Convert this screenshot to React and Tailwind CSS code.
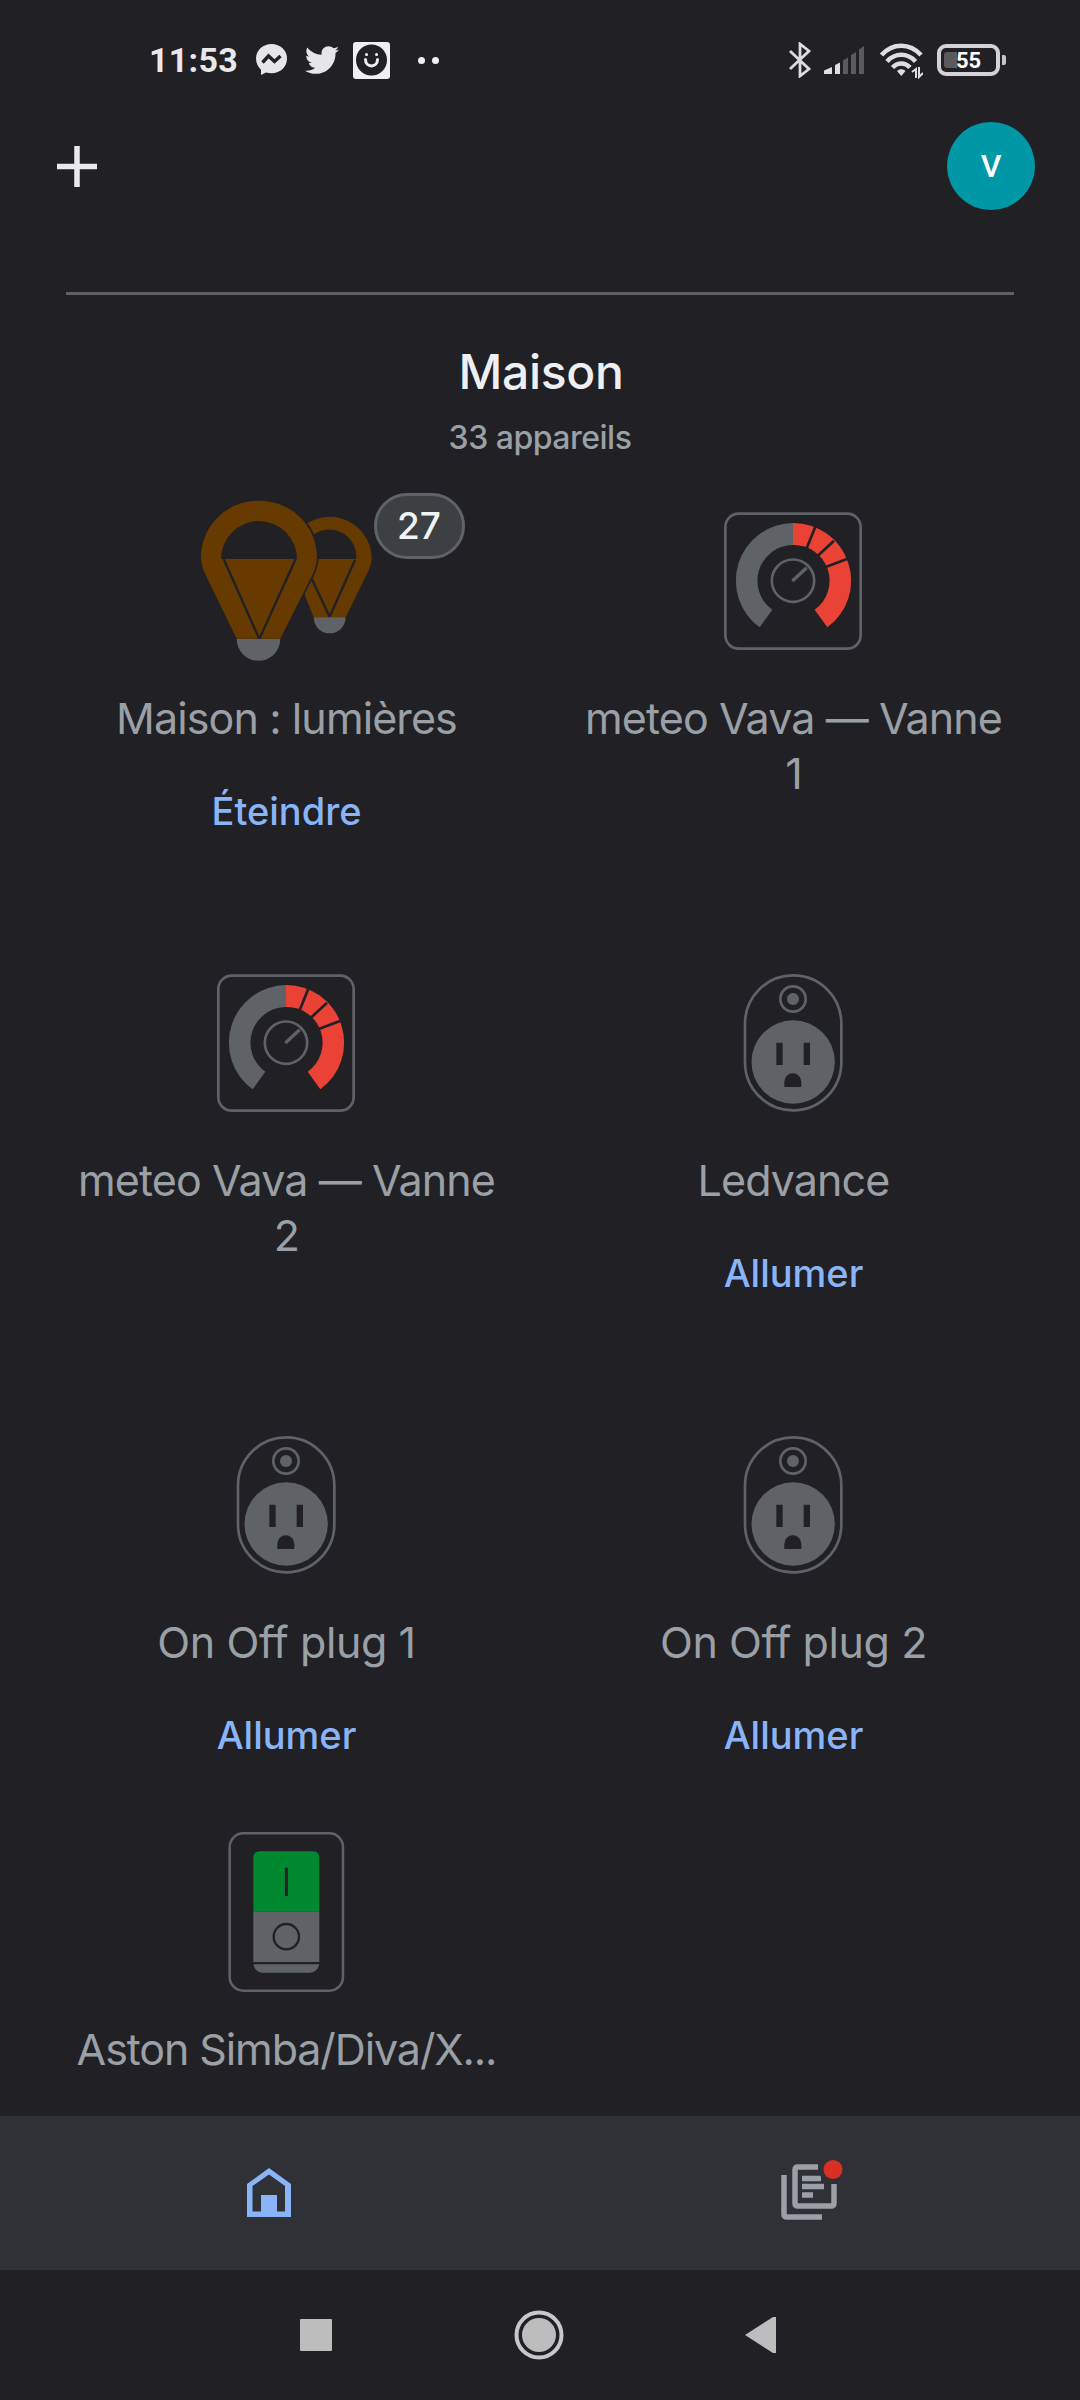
import React from "react";

function StatusBar() {
  return (
    <header className="flex h-[120px] items-center justify-between pl-[149px] pr-[74px] font-['Roboto',sans-serif] text-[#e8e8ea]">
      <div className="flex h-[40px] items-center">
        <span className="w-[88px] whitespace-nowrap text-[34px] font-bold leading-[40px] tracking-[0.3px]">11:53</span>
        <svg className="ml-[18px]" width="33" height="34" viewBox="0 0 33 34">
          <path fill="#e6e6e8" d="M16.5 1C7.5 1 1 7.4 1 15.6c0 4.6 2 8.500 5 11.100v5.300l5-2.500c1.700.5 3.500.8 5.500.8 9 0 15.500-6.500 15.500-14.700S25.500 1 16.500 1z" />
          <path fill="none" stroke="#202025" strokeWidth="3.400" d="M7.500 19.500l6-6.500 6 5.500 6-5.500" />
        </svg>
        <svg className="ml-[15px]" width="37" height="36" viewBox="0 0 24 24">
          <path fill="#e6e6e8" d="M23.643 4.937c-.835.37-1.732.62-2.675.733.962-.576 1.700-1.490 2.048-2.578-.9.534-1.897.922-2.958 1.130-.850-.904-2.060-1.470-3.400-1.470-2.572 0-4.658 2.086-4.658 4.660 0 .364.042.718.120 1.060-3.873-.195-7.304-2.050-9.602-4.868-.4.690-.63 1.490-.63 2.342 0 1.616.823 3.043 2.072 3.878-.764-.025-1.482-.234-2.110-.583v.06c0 2.257 1.605 4.140 3.737 4.568-.392.106-.803.162-1.227.162-.3 0-.593-.028-.877-.082.593 1.850 2.313 3.198 4.352 3.234-1.595 1.250-3.604 1.995-5.786 1.995-.376 0-.747-.022-1.112-.065 2.062 1.323 4.510 2.093 7.140 2.093 8.570 0 13.255-7.098 13.255-13.254 0-.2-.005-.402-.014-.602.910-.658 1.700-1.477 2.323-2.410z" />
        </svg>
        <svg className="ml-[13px]" width="37" height="37" viewBox="0 0 37 37">
          <rect width="37" height="37" rx="3" fill="#f0f0f1" />
          <circle cx="18.500" cy="18" r="15.500" fill="#202025" />
          <g fill="none" stroke="#f0f0f1" strokeLinecap="round">
            <path strokeWidth="3" d="M12.500 17.500c0 8.500 12 8.500 12 0" />
            <path strokeWidth="3" d="M13.500 12.500h.1M23.500 12.500h.1" />
          </g>
        </svg>
        <span className="ml-[28px] size-[7px] rounded-full bg-[#f0f0f1]" />
        <span className="ml-[7px] size-[7px] rounded-full bg-[#f0f0f1]" />
      </div>
      <div className="flex h-[40px] items-center">
        <svg width="24" height="36" viewBox="0 0 24 36">
          <path fill="none" stroke="#dcdcde" strokeWidth="2.800" d="M2 9l19 18-9 7V2l9 7L2 27" />
        </svg>
        <svg className="ml-[12px]" width="40" height="30" viewBox="0 0 40 30">
          <path fill="#dededf" d="M0 29v-3.500L8 22v7zM11 29v-9l5-2.500V29z" />
          <path fill="#5b5b5f" d="M19 29V15.500l5-3V29zM27 29V10l5-3v22zM35 29V4.500L40 1v28z" />
        </svg>
        <svg className="ml-[16px]" width="43" height="38" viewBox="0 0 43 38">
          <g fill="none" stroke="#dededf" strokeWidth="4.500">
            <path d="M1.500 14c11-12.500 28.500-12.500 39.500 0" />
            <path d="M7 20.500c8-9 20.500-9 28.500 0" />
            <path d="M12.500 26.500c5-5.500 12.500-5.500 17.500 0" />
          </g>
          <path fill="#dededf" d="M17 30c2.500-2.500 6-2.500 8.500 0l-4.200 5z" />
          <path fill="none" stroke="#dededf" strokeWidth="2" d="M32 31l4-3v9M43 32l-4 4v-10" />
        </svg>
        <div className="ml-[14px] flex h-[32px] w-[63px] items-center rounded-[9px] border-[4px] border-[#d4d2d7] pl-[3px]">
          <span className="h-[16px] w-[13px] rounded-l-[3px] bg-[#5a5a5d]" />
          <span className="-ml-[1px] pt-[2px] text-[22px] font-bold leading-none text-white">55</span>
        </div>
        <span className="ml-[2px] h-[10px] w-[4px] rounded-r-[2px] bg-[#c4c4c8]" />
      </div>
    </header>
  );
}

function BulbsIcon() {
  return (
    <svg width="300" height="200" viewBox="-133 3 900 600">
      <path fill="#673b00" d="M376 133A126 126 0 0 1 574 235Q574 255 561 279L496 412H400L370 337z" />
      <path fill="#202025" d="M396 166A82 82 0 0 1 528 237H402z" />
      <path fill="none" stroke="#202025" strokeWidth="7" d="M524 240l-76 170-56-118" />
      <path fill="#5f6368" d="M400 412h96a48 48 0 0 1-96 0z" />
      <path fill="#673b00" stroke="#202025" strokeWidth="10" paintOrder="stroke" d="M169 476L76 285Q62 257 62 232C62 140 137 62 236 62s174 78 174 170q0 25-14 53l-96 191z" />
      <path fill="#202025" d="M122 237a114 114 0 0 1 228 0z" />
      <path fill="none" stroke="#202025" strokeWidth="7" d="M130 237l107 240 109-240" />
      <path fill="#5f6368" d="M169 477h131a65.500 65.500 0 0 1-131 0z" />
    </svg>
  );
}

function GaugeIcon() {
  return (
    <svg width="200" height="200" viewBox="-21 -27 600 600">
      <rect x="76" y="71" width="406" height="405" rx="40" fill="none" stroke="#5f6368" strokeWidth="8" />
      <path fill="#5f6368" d="M279 99A173 173 0 0 0 179 412L217 359A107 107 0 0 1 279 165z" />
      <path fill="#ea4335" d="M279 99A173 173 0 0 1 382 412L344 359A107 107 0 0 0 279 165z" />
      <path fill="none" stroke="#202025" strokeWidth="8" d="M346 110l-28 70M402 152l-50 47M443 206l-66 25" />
      <circle cx="279" cy="272" r="63.500" fill="none" stroke="#5f6368" strokeWidth="8" />
      <path stroke="#5f6368" strokeWidth="10" d="M277 273l43-40" />
    </svg>
  );
}

function PlugIcon() {
  return (
    <svg width="200" height="200" viewBox="-81 -51 600 600">
      <rect x="75" y="46" width="289" height="405" rx="144.500" fill="none" stroke="#5f6368" strokeWidth="8" />
      <circle cx="219" cy="117" r="38" fill="none" stroke="#5f6368" strokeWidth="8" />
      <circle cx="219" cy="117" r="18" fill="#5f6368" />
      <circle cx="219.500" cy="306" r="125" fill="#5f6368" />
      <path fill="#202025" d="M169 248h19v67h-19zM251 248h19v67h-19zM193 381v-16a25.500 25.500 0 0 1 51 0v16z" />
    </svg>
  );
}

function SwitchIcon() {
  return (
    <svg width="200" height="200" viewBox="-43 6 600 600">
      <rect x="88" y="70" width="340" height="472" rx="41" fill="none" stroke="#5f6368" strokeWidth="7.500" />
      <path fill="#008930" d="M159 305V144q0-20 20-20h158q20 0 20 20v161z" />
      <path fill="#5f6368" d="M159 305h198v151H159zM159 463h198q-6 25-28 25H187q-22 0-28-25z" />
      <path stroke="#202025" strokeWidth="9" d="M258 173v85" />
      <circle cx="258" cy="380" r="38" fill="none" stroke="#202025" strokeWidth="7" />
    </svg>
  );
}

function Tile({ icon, label, action, badge, labelClass = "" }) {
  return (
    <article className="flex w-[507px] flex-col items-center">
      <div className="relative flex h-[200px] w-[300px] justify-center">
        {icon}
        {badge && (
          <span className="absolute left-[238px] top-[12px] flex h-[66px] w-[91px] items-center justify-center rounded-full border-[3px] border-[#5f6368] bg-[#3c4043] text-[37px] font-medium text-[#f1f3f4]">
            {badge}
          </span>
        )}
      </div>
      <h2 className={`ml-[2px] mt-[10px] w-[427px] text-center text-[43px] leading-[55px] text-[#9aa0a6] ${labelClass}`}>{label}</h2>
      {action && (
        <button className="ml-[2px] mt-[41px] whitespace-nowrap text-[38px] font-medium leading-[48px] text-[#8ab4f8]">{action}</button>
      )}
    </article>
  );
}

function BottomNav() {
  return (
    <nav className="grid h-[154px] shrink-0 grid-cols-2 bg-[#303136]">
      <button className="flex items-start justify-center pr-[2px] pt-[51px]">
        <svg width="46" height="51" viewBox="0 0 46 51">
          <path fill="#8ab4f8" fillRule="evenodd" d="M1 50V17L23 1l22 16v33zM6.500 44.500h8.500V28h16v16.500h8V19L23 7.500 6.500 19z" />
        </svg>
      </button>
      <button className="flex items-start justify-center pt-[43px]">
        <svg className="overflow-visible" width="64" height="64" viewBox="0 0 64 64">
          <g fill="none" stroke="#9aa0a6" strokeWidth="5.500">
            <path d="M6 16v39q0 3 3 3h35" />
            <path d="M40 8H20q-3 0-3 3v33q0 3 3 3h33q3 0 3-3V25" />
            <path d="M24 19.500h19M24 27.500h22M24 36h11" />
          </g>
          <circle cx="55" cy="11" r="14" fill="#303136" />
          <circle cx="55" cy="10.500" r="9.500" fill="#d93025" />
        </svg>
      </button>
    </nav>
  );
}

function SystemNav() {
  return (
    <footer className="flex h-[130px] shrink-0 items-center pl-[300px]">
      <span className="size-[32px] rounded-[1px] bg-[#bdbdbd]" />
      <svg className="ml-[182px]" width="50" height="50" viewBox="0 0 50 50">
        <circle cx="25" cy="25" r="22.500" fill="none" stroke="#c8c8cc" strokeWidth="4" />
        <circle cx="25" cy="25" r="17" fill="#bdbdbd" />
      </svg>
      <svg className="ml-[181px]" width="31" height="36" viewBox="0 0 31 36">
        <path fill="#bdbdbd" d="M31 0v36h-3L0 18 28 0z" />
      </svg>
    </footer>
  );
}

export default function App() {
  return (
    <div className="flex h-[2400px] w-[1080px] flex-col overflow-hidden bg-[#202025] font-['Inter',sans-serif]">
      <StatusBar />
      <div className="flex h-[92px] items-center justify-between pl-[57px] pr-[45px]">
        <svg width="41" height="41" viewBox="0 0 41 41">
          <path stroke="#e8eaed" strokeWidth="5.500" d="M20 0v41M0 20.500h40" />
        </svg>
        <div className="flex size-[88px] items-center justify-center rounded-full bg-[#0097a7] font-['Roboto',sans-serif] text-[32px] font-medium text-white">V</div>
      </div>
      <div className="mx-[66px] mt-[80px] h-[3px] shrink-0 bg-[#5f6063]" />
      <section className="flex h-[186px] shrink-0 flex-col items-center pt-[47px]">
        <h1 className="ml-[2px] text-[48px] font-medium leading-[60px] tracking-[-0.3px] text-[#eeeff2]">Maison</h1>
        <p className="mt-[16px] text-[32px] font-medium leading-[40px] tracking-[-0.5px] text-[#9aa0a6]">33 appareils</p>
      </section>
      <main className="grid min-h-0 flex-1 grid-cols-[507px_507px] grid-rows-[462px_462px_407px_303px] overflow-hidden pl-[32px]">
        <Tile icon={<BulbsIcon />} badge="27" label="Maison : lumières" labelClass="tracking-[-0.9px]" action="Éteindre" />
        <Tile icon={<GaugeIcon />} label="meteo Vava — Vanne 1" labelClass="tracking-[-0.9px]" />
        <Tile icon={<GaugeIcon />} label="meteo Vava — Vanne 2" labelClass="tracking-[-0.9px]" />
        <Tile icon={<PlugIcon />} label="Ledvance" labelClass="tracking-[-0.9px]" action="Allumer" />
        <Tile icon={<PlugIcon />} label="On Off plug 1" labelClass="tracking-[-0.4px]" action="Allumer" />
        <Tile icon={<PlugIcon />} label="On Off plug 2" labelClass="tracking-[-0.4px]" action="Allumer" />
        <Tile icon={<SwitchIcon />} label="Aston Simba/Diva/X..." labelClass="whitespace-nowrap tracking-[-1.1px]" />
      </main>
      <BottomNav />
      <SystemNav />
    </div>
  );
}
